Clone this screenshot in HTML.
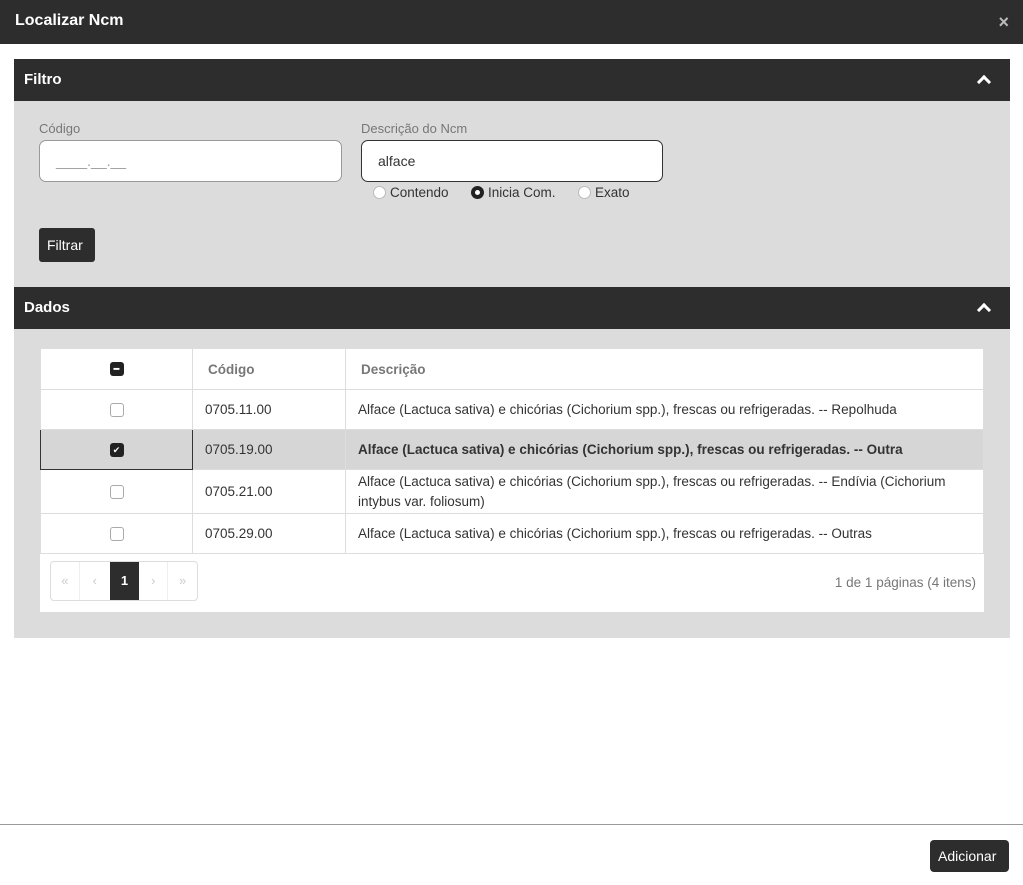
<!DOCTYPE html>
<html><head><meta charset="utf-8"><style>
*{box-sizing:border-box;margin:0;padding:0}
body{width:1023px;height:885px;background:#fff;font-family:"Liberation Sans",sans-serif;position:relative;overflow:hidden;color:#333}
.abs{position:absolute}
.hdr{left:0;top:0;width:1023px;height:44px;background:#2d2d2d;color:#fff;font-weight:bold;font-size:16px;padding:12px 15px}
.bar{left:14px;width:996px;height:42px;background:#2d2d2d;color:#fff;font-weight:bold;font-size:15px;padding:12px 10px}
.chev{position:absolute;right:21px;top:18px;width:10px;height:10px;border-left:3px solid #fff;border-top:3px solid #fff;transform:rotate(45deg)}
.panel{left:14px;background:#dcdcdc;width:996px}
.lbl{font-size:13px;color:#777}
.inp{background:#fff;border:1px solid #999;border-radius:7px;height:42px;font-size:14px;padding:12px 16px}
.rad{position:absolute;width:13px;height:13px;border-radius:50%;background:#fff;border:1px solid #bbb;top:186px}
.rt{position:absolute;top:185px;font-size:13.5px}
table{border-collapse:collapse;position:absolute;left:40px;top:348px;width:944px;background:#fff;font-size:13.5px}
td{border:1px solid #ddd;padding:0 12px;height:40px;color:#333}
th{border:1px solid #ddd;height:41px;text-align:left;padding:0 15px;color:#777;font-size:13.5px}
.cb{display:block;margin:0 auto;width:14px;height:14px;border:1px solid #aaa;border-radius:3px;background:#fff}
.cbd{display:block;margin:0 auto;width:14px;height:14px;border-radius:3px;background:#222;color:#fff;font-size:9px;text-align:center;line-height:14px}
</style></head><body>
<div class="abs hdr">Localizar Ncm<span style="position:absolute;right:14px;top:12px;color:#bbb;font-size:18px">×</span></div>
<div class="abs bar" style="top:59px">Filtro<div class="chev"></div></div>
<div class="abs panel" style="top:101px;height:186px"></div>
<div class="abs lbl" style="left:39px;top:121px">Código</div>
<div class="abs inp" style="left:39px;top:140px;width:303px;color:#999">____.__.__</div>
<div class="abs lbl" style="left:361px;top:121px">Descrição do Ncm</div>
<div class="abs inp" style="left:361px;top:140px;width:302px;border-color:#333">alface</div>
<span class="rad" style="left:373px"></span><span class="rt" style="left:390px">Contendo</span>
<span class="rad" style="left:471px;border:4px solid #222"></span><span class="rt" style="left:488px">Inicia Com.</span>
<span class="rad" style="left:578px"></span><span class="rt" style="left:595px">Exato</span>
<div class="abs" style="left:39px;top:228px;width:56px;height:34px;background:#2d2d2d;color:#fff;border-radius:3px;font-size:14px;padding:9px 8px">Filtrar</div>
<div class="abs bar" style="top:287px">Dados<div class="chev"></div></div>
<div class="abs panel" style="top:329px;height:309px"></div>
<div class="abs" style="left:40px;top:348px;width:944px;height:264px;background:#fff"></div>
<table>
<tr><th style="width:152px;text-align:center"><span class="cbd">━</span></th><th style="width:153px">Código</th><th>Descrição</th></tr>
<tr><td><span class="cb"></span></td><td>0705.11.00</td><td>Alface (Lactuca sativa) e chicórias (Cichorium spp.), frescas ou refrigeradas. -- Repolhuda</td></tr>
<tr style="background:#d6d6d6"><td style="border:1px solid #333"><span class="cbd">✔</span></td><td>0705.19.00</td><td style="font-weight:bold">Alface (Lactuca sativa) e chicórias (Cichorium spp.), frescas ou refrigeradas. -- Outra</td></tr>
<tr><td style="height:44px"><span class="cb"></span></td><td>0705.21.00</td><td style="line-height:20px">Alface (Lactuca sativa) e chicórias (Cichorium spp.), frescas ou refrigeradas. -- Endívia (Cichorium<br>intybus var. foliosum)</td></tr>
<tr><td><span class="cb"></span></td><td>0705.29.00</td><td>Alface (Lactuca sativa) e chicórias (Cichorium spp.), frescas ou refrigeradas. -- Outras</td></tr>
</table>
<div class="abs" style="left:50px;top:561px;width:148px;height:40px;border:1px solid #ddd;border-radius:4px;display:flex;font-size:13px;color:#ccc;overflow:hidden">
<div style="width:29px;text-align:center;line-height:38px;border-right:1px solid #eee">«</div>
<div style="width:30px;text-align:center;line-height:38px">‹</div>
<div style="width:30px;text-align:center;line-height:38px;background:#2d2d2d;color:#fff;font-weight:bold">1</div>
<div style="width:29px;text-align:center;line-height:38px;border-right:1px solid #eee">›</div>
<div style="width:29px;text-align:center;line-height:38px">»</div></div>
<div class="abs" style="right:47px;top:575px;font-size:13.5px;color:#777">1 de 1 páginas (4 itens)</div>
<div class="abs" style="left:0;top:824px;width:1023px;border-top:1px solid #999"></div>
<div class="abs" style="left:930px;top:840px;width:79px;height:32px;background:#2d2d2d;color:#fff;border-radius:4px;font-size:14px;padding:8px 8px">Adicionar</div>
</body></html>
